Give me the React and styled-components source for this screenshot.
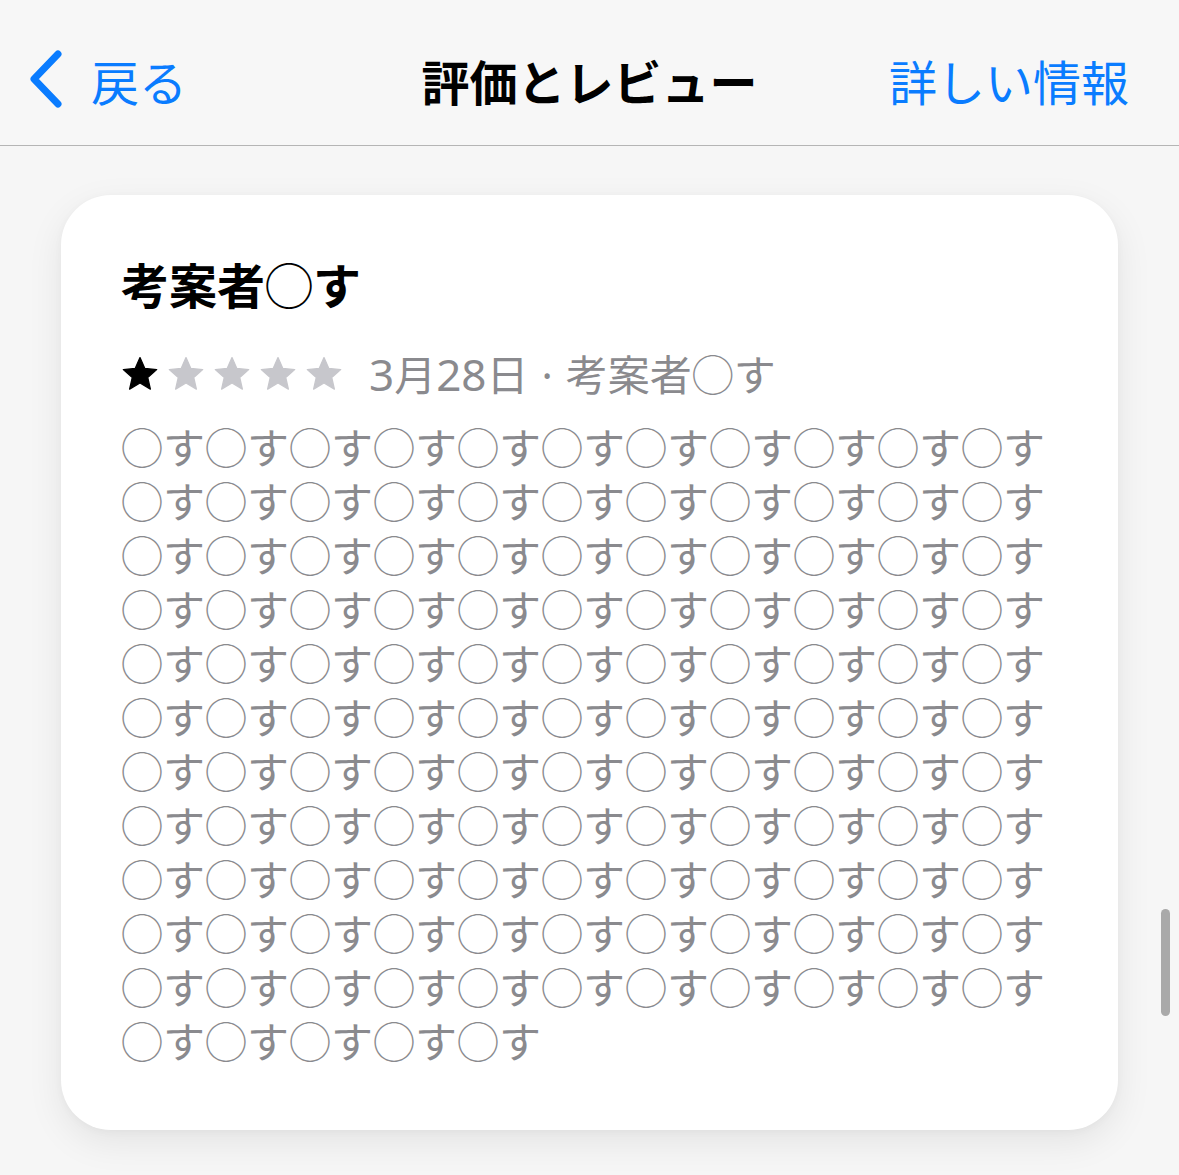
import React from "react";
import styled, { createGlobalStyle } from "styled-components";

const Global = createGlobalStyle`
  html, body { margin: 0; padding: 0; background: #f6f6f6; }
  body { font-family: "Noto Sans CJK JP", "Noto Sans", sans-serif; }
`;

const Page = styled.div`
  position: relative;
  width: 1179px;
  height: 1175px;
  background: #f6f6f6;
  overflow: hidden;
`;

const NavBar = styled.header`
  display: grid;
  grid-template-columns: 1fr auto 1fr;
  align-items: center;
  height: 146px;
  padding: 14px 28px 0 28px;
  box-sizing: border-box;
  background: #f7f7f7;
  border-bottom: 1px solid #b5b5b5;
`;

const NavButton = styled.div`
  display: flex;
  align-items: center;
  justify-self: ${(p) => (p.$end ? "end" : "start")};
  margin-right: ${(p) => (p.$end ? "22px" : "0")};
  gap: 27px;
  color: #0a7cff;
  font-size: 48px;
  line-height: 1;
`;

const NavTitle = styled.h1`
  margin: 0;
  font-size: 48px;
  font-weight: 700;
  line-height: 1;
  color: #000;
`;

const Card = styled.section`
  margin: 49px 61px 0 61px;
  background: #fff;
  border-radius: 50px;
  box-shadow: 0 12px 36px rgba(0, 0, 0, 0.08), 0 2px 8px rgba(0, 0, 0, 0.03);
  padding: 61px 60px 63px 60px;
  display: flex;
  flex-direction: column;
`;

const ReviewTitle = styled.h2`
  margin: 0;
  font-size: 48px;
  font-weight: 700;
  line-height: 54px;
  color: #000;
`;

const MetaRow = styled.div`
  display: flex;
  align-items: center;
  gap: 26px;
  margin-top: 37px;
  height: 54px;
`;

const Stars = styled.div`
  display: flex;
  gap: 8px;
`;

const Meta = styled.span`
  font-size: 42px;
  line-height: 54px;
  color: #8a8a8e;
`;

const Digits = styled.span`
  font-family: "Noto Sans", "Noto Sans CJK JP", sans-serif;
  font-size: 44px;
`;

const Dot = styled.span`
  font-family: "Noto Sans", sans-serif;
  margin: 0 13px;
`;

const Body = styled.p`
  margin: 18px 0 0 0;
  font-size: 42px;
  line-height: 54px;
  color: #8a8a8e;
  word-break: break-all;
`;

const ScrollThumb = styled.div`
  position: absolute;
  left: 1161px;
  top: 909px;
  width: 9px;
  height: 107px;
  border-radius: 5px;
  background: #a9a9a9;
`;

const Star = ({ filled }) => (
  <svg width="38" height="38" viewBox="0 0 24 24">
    <path
      d="M12 1.6l3.05 6.9 7.5.7-5.67 4.97 1.68 7.36L12 17.7l-6.56 3.83 1.68-7.36L1.45 9.2l7.5-.7z"
      fill={filled ? "#000" : "#c7c7cc"}
      stroke={filled ? "#000" : "#c7c7cc"}
      strokeWidth="0.8"
      strokeLinejoin="round"
    />
  </svg>
);

const Chevron = () => (
  <svg width="36" height="60" viewBox="0 0 36 60">
    <path
      d="M30 4 L6 29 L30 54"
      fill="none"
      stroke="#0a7cff"
      strokeWidth="7"
      strokeLinecap="round"
      strokeLinejoin="round"
    />
  </svg>
);

export default function App() {
  const body = "◯す".repeat(126);
  return (
    <Page>
      <Global />
      <NavBar>
        <NavButton>
          <Chevron />
          <span>戻る</span>
        </NavButton>
        <NavTitle>評価とレビュー</NavTitle>
        <NavButton $end>
          <span>詳しい情報</span>
        </NavButton>
      </NavBar>
      <Card>
        <ReviewTitle>考案者◯す</ReviewTitle>
        <MetaRow>
          <Stars>
            {[0, 1, 2, 3, 4].map((i) => (
              <Star key={i} filled={i < 1} />
            ))}
          </Stars>
          <Meta>
            <Digits>3</Digits>月<Digits>28</Digits>日<Dot>·</Dot>考案者◯す
          </Meta>
        </MetaRow>
        <Body>{body}</Body>
      </Card>
      <ScrollThumb />
    </Page>
  );
}
